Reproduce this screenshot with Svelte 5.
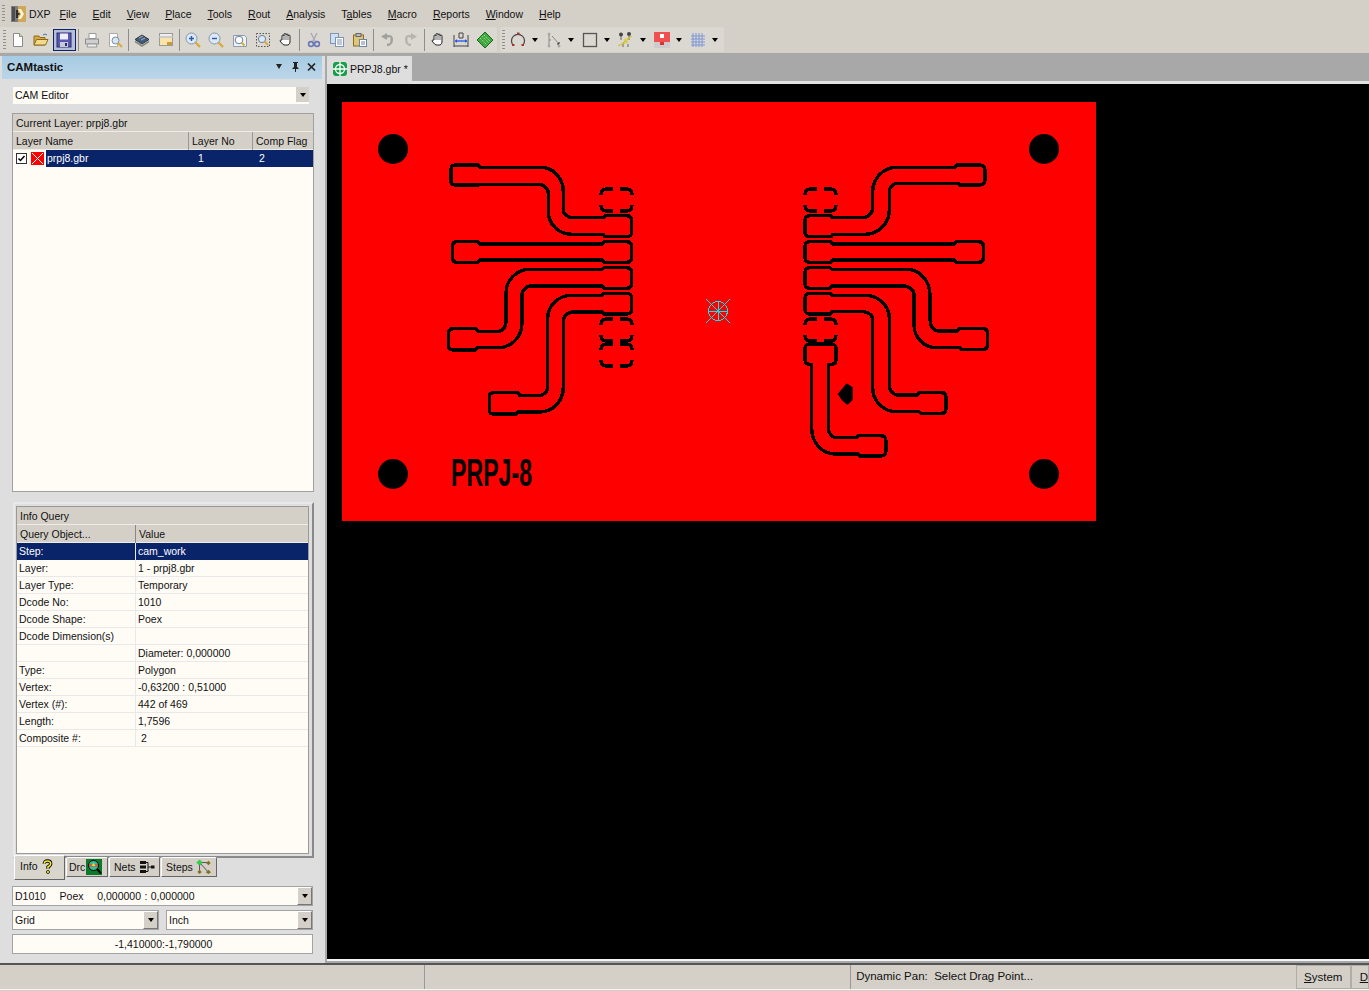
<script>
	const menus = [
		['F', 'ile'], ['E', 'dit'], ['V', 'iew'], ['P', 'lace'], ['T', 'ools'], ['R', 'out'],
		['A', 'nalysis'], ['Ta', 'bles', 1], ['M', 'acro'], ['R', 'eports'], ['W', 'indow'], ['H', 'elp']
	];

	const queryRows = [
		['Step:', 'cam_work'],
		['Layer:', '1 - prpj8.gbr'],
		['Layer Type:', 'Temporary'],
		['Dcode No:', '1010'],
		['Dcode Shape:', 'Poex'],
		['Dcode Dimension(s)', ''],
		['', 'Diameter: 0,000000'],
		['Type:', 'Polygon'],
		['Vertex:', '-0,63200 : 0,51000'],
		['Vertex (#):', '442 of 469'],
		['Length:', '1,7596'],
		['Composite #:', ' 2']
	];

	const traces = [
		'M455 165H478L480 167.5H541.7A21.6 24.2 0 0 1 563.3 191.7V210A10 7.7 0 0 0 573.3 217.7H603L605 215.7H626.7Q631.7 215.7 631.7 220.7V231.7Q631.7 236.7 626.7 236.7H605L603 234.3H571.7A23.4 22.6 0 0 1 548.3 211.7V193.3A10 9 0 0 0 538.3 184.3H480L478 185H455Q451 185 451 181V169Q451 165 455 165Z',
		'M457 241.7H478L480 244H602L604 241.7H626.7Q631.7 241.7 631.7 246.7V257.3Q631.7 262.3 626.7 262.3H604L602 260H480L478 262.3H457Q452.7 262.3 452.7 258V246Q452.7 241.7 457 241.7Z',
		'M626.7 267.7H604L602 269.3H530A24 24 0 0 0 506 293.3V321.7A7.7 9.6 0 0 1 498.3 331.3H478L476 328.7H453.3Q448.3 328.7 448.3 333.7V345Q448.3 350 453.3 350H475L477 347.7H498.3A23.7 24.4 0 0 0 522 323.3V295A9.7 9 0 0 1 531.7 286H602L604 288.3H626.7Q631.7 288.3 631.7 283.3V272.7Q631.7 267.7 626.7 267.7Z',
		'M626.7 293.3H604L602 295.3H571.7A24 23 0 0 0 547.7 318.3V386.7A9.4 9 0 0 1 538.3 395.7H520L518 392.7H493.3Q489.3 392.7 489.3 396.7V410Q489.3 414 493.3 414H516L518 412H540A23.3 24.7 0 0 0 563.3 387.3V321.7A10 9.7 0 0 1 573.3 312H602L604 314H626.7Q631.7 314 631.7 309V298.3Q631.7 293.3 626.7 293.3Z',
		'M809.7 215.7H831L833 217.7H861.7A11 9.4 0 0 0 872.7 208.3V191.7A24 24.4 0 0 1 896.7 167.3H955L957 165H980Q985 165 985 170V180Q985 185 980 185H960L958 183.3H898.3A9 8.4 0 0 0 889.3 191.7V210A24.3 24.3 0 0 1 865 234.3H833L831 236.7H809.7Q805 236.7 805 232V220.4Q805 215.7 809.7 215.7Z',
		'M809.7 241.7H831L833 244H954L956 241.7H978.6Q983.3 241.7 983.3 246.4V257.6Q983.3 262.3 978.6 262.3H956L954 260H833L831 262.3H809.7Q805 262.3 805 257.6V246.4Q805 241.7 809.7 241.7Z',
		'M809.7 267.7H830L832 269.3H906.7A23.3 25.7 0 0 1 930 295V320A8.3 11 0 0 0 938.3 331H957L959 328.7H983Q987.7 328.7 987.7 333.4V344.6Q987.7 349.3 983 349.3H961.7L959.7 347.7H936.7A22.7 22.7 0 0 1 914 325V295A10.7 9 0 0 0 903.3 286H832L830 288.3H809.7Q805 288.3 805 283.6V272.4Q805 267.7 809.7 267.7Z',
		'M809.7 293.3H830L832 295.3H865A24.3 23 0 0 1 889.3 318.3V385A9 10 0 0 0 898.3 395H917L919 392.7H941.7Q946 392.7 946 397V409Q946 413.3 941.7 413.3H921L919 411.7H896.7A24 23.4 0 0 1 872.7 388.3V320A9.4 8.3 0 0 0 863.3 311.7H832L830 314H809.7Q805 314 805 309.3V298Q805 293.3 809.7 293.3Z',
		'M809.7 344H831.3Q836 344 836 348.7V359.6Q836 364.3 831.3 364.3H828.3V428.3A8.4 9.4 0 0 0 836.7 437.7H856.5L858.5 435.7H880.7Q886 435.7 886 441V450.7Q886 456 880.7 456H860L858 454H835A23.3 25.7 0 0 1 811.7 428.3V364.3H809.7Q805 364.3 805 359.6V348.7Q805 344 809.7 344Z'
	];

	// pads that are only drawn as four corners
	const pads = [[601, 189], [601, 319], [601, 344], [805, 189], [805, 319]];
	const holes = [[393, 149], [1044, 149], [393, 474], [1044, 474]];

	function corners([x, y]) {
		const w = 31;
		const h = 22;
		return `M${x + 12} ${y}H${x + 5}Q${x} ${y} ${x} ${y + 6}M${x + w - 12} ${y}H${x + w - 5}Q${x + w} ${y} ${x + w} ${y + 6}` +
			`M${x} ${y + h - 6}Q${x} ${y + h} ${x + 5} ${y + h}H${x + 12}M${x + w} ${y + h - 6}Q${x + w} ${y + h} ${x + w - 5} ${y + h}H${x + w - 12}`;
	}
</script>

<div class="app">
	<nav class="menubar">
		<span class="grip"></span>
		<svg class="logo" viewBox="0 0 15 16">
			<rect width="8" height="16" fill="#7d7d7d" />
			<rect x="1" y="1" width="3" height="14" fill="#4e4e4e" />
			<rect x="7" width="8" height="16" fill="#cfa957" />
			<path d="M7 3h3l3 5-3 5H7l3-5z" fill="#fbf3d8" />
			<path d="M5 4h2v3h1l1 1-1 1H7v3H5z" fill="#2e2e2e" />
		</svg>
		<span class="menu dxp">DXP</span>
		{#each menus as m}
			<span class="menu">{#if m[2]}T<u>a</u>{:else}<u>{m[0]}</u>{/if}{m[1]}</span>
		{/each}
	</nav>

	<div class="toolbars">
		<div class="toolbar first">
			<span class="grip"></span>
			<span class="tb">
				<svg viewBox="0 0 16 16"><path d="M3.5 1.5h6l3 3v10h-9z" fill="#fff" stroke="#8a8a8a" /><path d="M9.5 1.5v3h3" fill="#e8d98a" stroke="#8a8a8a" /></svg>
			</span>
			<span class="tb">
				<svg viewBox="0 0 16 16"><path d="M1 13V4h5l1 1.5h5V13z" fill="#d9a93f" stroke="#8c6d20" /><path d="M1 13l2.5-5.5H15L12.5 13z" fill="#f5d98a" stroke="#8c6d20" /><path d="M10 3q2-2 4 0" fill="none" stroke="#4a6ea8" /></svg>
			</span>
			<span class="tb active">
				<svg viewBox="0 0 16 16"><rect x="1" y="1" width="14" height="14" fill="#5858b0" stroke="#2a2a70" /><rect x="4" y="1.5" width="8" height="6" fill="#eef" /><rect x="4" y="10" width="8" height="5" fill="#c8c8d8" /><rect x="9" y="11" width="2" height="3" fill="#2a2a70" /></svg>
			</span>
			<span class="sep"></span>
			<span class="tb">
				<svg viewBox="0 0 16 16"><path d="M5 1.5h7v5H5z" fill="#fff" stroke="#9a9a9a" /><path d="M1.5 7h13v5h-13z" fill="#cfcfcf" stroke="#8a8a8a" /><path d="M4 12h8l1 3H3z" fill="#eee" stroke="#9a9a9a" /></svg>
			</span>
			<span class="tb">
				<svg viewBox="0 0 16 16"><path d="M2.5 1.5h8v13h-8z" fill="#fff" stroke="#aaa" /><circle cx="8.5" cy="8.5" r="3.5" fill="#d6e6f5" stroke="#7d8ea3" /><path d="M11 11l4 4" stroke="#d8a93c" stroke-width="2" /></svg>
			</span>
			<span class="sep"></span>
			<span class="tb">
				<svg viewBox="0 0 16 16"><path d="M8 3l7 4.5L8 12 1 7.5z" fill="#3f5f7f" stroke="#333" /><path d="M1 9.5L8 14l7-4.5" fill="none" stroke="#888" stroke-width="1.5" /><path d="M5 6l4-2M7 8l4-2" stroke="#aac" /></svg>
			</span>
			<span class="tb">
				<svg viewBox="0 0 16 16"><rect x="1.5" y="1.5" width="13" height="12" fill="#eee" stroke="#999" /><rect x="1.5" y="4" width="13" height="2" fill="#ccc" /><rect x="2" y="6" width="12" height="7" fill="#fbe3a8" /><rect x="9" y="10" width="5" height="3" fill="#c89a3a" /></svg>
			</span>
			<span class="sep"></span>
			<span class="tb">
				<svg viewBox="0 0 16 16"><circle cx="6.5" cy="6.5" r="5.5" fill="#dbe8f5" stroke="#8496a8" /><path d="M4 6.5h5M6.5 4v5" stroke="#2a5aa8" stroke-width="1.4" /><path d="M10.500 10.500l4.500 4.500" stroke="#d8a93c" stroke-width="2.4" /></svg>
			</span>
			<span class="tb">
				<svg viewBox="0 0 16 16"><circle cx="6.5" cy="6.5" r="5.5" fill="#dbe8f5" stroke="#8496a8" /><path d="M4 6.5h5" stroke="#2a5aa8" stroke-width="1.4" /><path d="M10.500 10.500l4.500 4.500" stroke="#d8a93c" stroke-width="2.4" /></svg>
			</span>
			<span class="tb">
				<svg viewBox="0 0 16 16"><path d="M1.500 3.500h11l2 2v9h-13z" fill="#eef3f8" stroke="#8a9cae" /><circle cx="7" cy="8" r="3.8" fill="#fff" stroke="#6a7f98" /><path d="M9.500 10.500l3 3" stroke="#d8a93c" stroke-width="2" /></svg>
			</span>
			<span class="tb">
				<svg viewBox="0 0 16 16"><rect x="1.5" y="1.5" width="13" height="13" fill="none" stroke="#555" stroke-dasharray="1.5 1.5" /><circle cx="7" cy="7" r="3.6" fill="#dbe8f5" stroke="#6a7f98" /><path d="M9.5 9.5l3.5 3.5" stroke="#d8a93c" stroke-width="2" /></svg>
			</span>
			<span class="tb">
				<svg viewBox="0 0 16 16"><path d="M4 8V4q0-1 1-1t1 1V2.500q0-1 1-1t1 1V3q0-1 1-1t1 1v1q0-1 1-1t1 1v6q0 2-2 3H6q-1 0-4-4 0-1 1-1z" fill="#fff" stroke="#222" /><path d="M6 4v4M8 3v5M10 4v4" stroke="#222" stroke-width=".7" /></svg>
			</span>
			<span class="sep"></span>
			<span class="tb">
				<svg viewBox="0 0 16 16"><path d="M5 1l4 8M11 1L7 9" stroke="#a8a8bc" stroke-width="1.4" /><circle cx="5" cy="12" r="2.4" fill="none" stroke="#6a78b8" stroke-width="1.6" /><circle cx="11" cy="12" r="2.4" fill="none" stroke="#6a78b8" stroke-width="1.6" /></svg>
			</span>
			<span class="tb">
				<svg viewBox="0 0 16 16"><rect x="1.5" y="1.5" width="8" height="10" fill="#cfe0f2" stroke="#7d94b4" /><rect x="6.5" y="5.5" width="8" height="9" fill="#fff" stroke="#7d94b4" /><path d="M8 8h5M8 10h5M8 12h5" stroke="#7d94b4" /></svg>
			</span>
			<span class="tb">
				<svg viewBox="0 0 16 16"><rect x="1.5" y="3" width="10" height="11" fill="#e2c677" stroke="#8c6d20" /><rect x="4" y="1.5" width="5" height="3" fill="#bbb" stroke="#666" /><rect x="7.5" y="7.5" width="7" height="7" fill="#fff" stroke="#6a84a8" /><path d="M9 10h4M9 12h4" stroke="#6a84a8" /></svg>
			</span>
			<span class="sep"></span>
			<span class="tb">
				<svg viewBox="0 0 16 16"><path d="M8 3h2q4 0 4 4.500T10 14H8v-2.500h2q1.500 0 1.500-4T10 5.500H8V8L2 4.500 8 1z" fill="#a0a09c" /></svg>
			</span>
			<span class="tb">
				<svg viewBox="0 0 16 16"><path d="M8 3H6Q2 3 2 7.500T6 14h2v-2.500H6q-1.500 0-1.500-4T6 5.500h2V8l6-3.500L8 1z" fill="#b4b4b0" /></svg>
			</span>
			<span class="sep"></span>
			<span class="tb">
				<svg viewBox="0 0 16 16"><path d="M4 8V4q0-1 1-1t1 1V2.500q0-1 1-1t1 1V3q0-1 1-1t1 1v1q0-1 1-1t1 1v6q0 2-2 3H6q-1 0-4-4 0-1 1-1z" fill="#fff" stroke="#222" /><path d="M6 4v4M8 3v5M10 4v4" stroke="#222" stroke-width=".7" /></svg>
			</span>
			<span class="tb">
				<svg viewBox="0 0 16 16"><path d="M1 3v12M15 3v12M1 14h14" stroke="#444" /><path d="M6 1v5h4V1H6z" fill="none" stroke="#444" /><path d="M2 9h12" stroke="#2255ee" stroke-width="1.300" /><path d="M2 9l2-2v4zM14 9l-2-2v4z" fill="#2255ee" /></svg>
			</span>
			<span class="tb">
				<svg viewBox="0 0 16 16"><path d="M8 0l8 8-8 8-8-8z" fill="#3fa83f" stroke="#1f6a1f" /><path d="M5 4l7 7M7 3l6 6M3 6l7 7" stroke="#a4dc8c" stroke-dasharray="1.500 1" /></svg>
			</span>
		</div>

		<div class="toolbar second">
			<span class="grip"></span>
			<span class="dd">
				<svg viewBox="0 0 16 16"><path d="M3 13A6.500 6.500 0 1 1 13 13" fill="none" stroke="#444" stroke-width="1.200" /><rect x="2" y="12" width="2.500" height="2" fill="#a33" /><rect x="11.500" y="12" width="2.500" height="2" fill="#a33" /><rect x="7" y="0.500" width="2.500" height="2" fill="#a33" /></svg>
				<i></i>
			</span>
			<span class="dd">
				<svg viewBox="0 0 16 16"><circle cx="3" cy="2" r="1.500" fill="#aaa" /><circle cx="3" cy="14" r="1.500" fill="#aaa" /><circle cx="13" cy="14" r="1.500" fill="#aaa" /><path d="M3 3v10M3 8h2M6 4l7 8" stroke="#888" /><path d="M11 12h2v-2" fill="none" stroke="#333" /></svg>
				<i></i>
			</span>
			<span class="dd">
				<svg viewBox="0 0 16 16"><rect x="1.500" y="1.500" width="13" height="13" fill="none" stroke="#555" stroke-width="1.300" /></svg>
				<i></i>
			</span>
			<span class="dd">
				<svg viewBox="0 0 16 16"><circle cx="3" cy="2.500" r="2" fill="#444" /><circle cx="11" cy="2" r="2" fill="#444" /><path d="M3 4v4M11 4v4M5 15v-3q0-2 2-2M10 15v-3" fill="none" stroke="#666" /><path d="M0 14l8-5-2-1 8-4-6 5 2 1z" fill="#f0e030" stroke="#c0b010" stroke-width=".4" /></svg>
				<i></i>
			</span>
			<span class="dd">
				<svg viewBox="0 0 16 16"><rect x="0" y="0" width="16" height="10" fill="#f05050" /><rect x="0" y="10" width="16" height="6" fill="#ccc" /><rect x="6" y="2" width="4" height="4" fill="#fff" /><rect x="6" y="10" width="4" height="3" fill="#e03030" /></svg>
				<i></i>
			</span>
			<span class="dd">
				<svg viewBox="0 0 16 16"><path d="M1 4h14M1 7h14M1 10h14M1 13h14M3 1v14M6 1v14M9 1v14M12 1v14" stroke="#7c96d4" /></svg>
				<i></i>
			</span>
		</div>
	</div>

	<main class="main">
		<aside class="panel">
			<header class="panel-head">
				<b>CAMtastic</b>
				<span class="down"></span>
				<svg class="pin" viewBox="0 0 9 10"><path d="M2 0h5v1H6v4l1.500 1v1H5v3H4V7H1.500V6L3 5V1H2z" fill="#222" /></svg>
				<svg class="pin close" viewBox="0 0 9 9"><path d="M1 1l7 7M8 1L1 8" stroke="#222" stroke-width="1.700" /></svg>
			</header>

			<div class="combo editor">
				<span>CAM Editor</span>
				<span class="combo-btn flat"><i></i></span>
			</div>

			<section class="layers">
				<div class="caption">Current Layer: prpj8.gbr</div>
				<div class="layer-cols">
					<span>Layer Name</span>
					<span>Layer No</span>
					<span>Comp Flag</span>
				</div>
				<div class="layer-row">
					<span class="layer-marks">
						<svg viewBox="0 0 11 11" class="check"><rect x=".5" y=".5" width="10" height="10" fill="#fff" stroke="#333" /><path d="M2.500 5.500l2 2 4-4.500" fill="none" stroke="#000" stroke-width="1.500" /></svg>
						<svg viewBox="0 0 13 13" class="swatch"><rect width="13" height="13" fill="#f00" /><path d="M1 1l11 11M12 1L1 12" stroke="#fff" /></svg>
					</span>
					<span class="layer-name">prpj8.gbr</span>
					<span>1</span>
					<span>2</span>
				</div>
			</section>

			<section class="query">
				<div class="query-inner">
					<div class="caption">Info Query</div>
					<div class="query-cols">
						<span>Query Object...</span>
						<span>Value</span>
					</div>
					{#each queryRows as row, i}
						<div class="query-row" class:selected={i === 0}>
							<span>{row[0]}</span>
							<span>{row[1]}</span>
						</div>
					{/each}
				</div>
			</section>

			<div class="tabs">
				<span class="tab on">Info
					<svg viewBox="0 0 12 16"><path d="M2.500 5q0-3 3.500-3t3.500 3q0 2-3 3.500V10.500" fill="none" stroke="#000" stroke-width="3.600" /><path d="M2.500 5q0-3 3.500-3t3.500 3q0 2-3 3.500V10.500" fill="none" stroke="#f8e830" stroke-width="1.800" /><circle cx="6.500" cy="14" r="1.700" fill="#f8e830" stroke="#000" stroke-width=".8" /></svg>
				</span>
				<span class="tab">Drc
					<svg viewBox="0 0 16 16" class="wide"><rect width="16" height="16" fill="#0a7a2a" /><circle cx="7.500" cy="6.500" r="5" fill="#30c0a0" stroke="#000" /><path d="M3 6.500h9" stroke="#f04030" stroke-width="2" /><path d="M7.500 4l2 3h-4z" fill="#f0e030" /><path d="M11 10l4 4.500" stroke="#000" stroke-width="2" /></svg>
				</span>
				<span class="tab">Nets
					<svg viewBox="0 0 16 14" class="wide"><path d="M1 1h6v3H1zM1 5.500h6v3H1zM1 10h6v3H1z" fill="#111" /><path d="M7 2.500h2v9H7M9 7h3" fill="none" stroke="#111" /><rect x="12" y="5.500" width="3.500" height="3" fill="#111" /></svg>
				</span>
				<span class="tab">Steps
					<svg viewBox="0 0 18 16" class="wide"><path d="M4 3l10 0M4 3l10 11M4 3v10" stroke="#444" fill="none" /><path d="M4 0l3 3-3 3-3-3z" fill="#20e030" stroke="#186" stroke-width=".5" /><path d="M14 1l2.500 2.500L14 6l-2.500-2.500zM4 11l2.500 2.500L4 16l-2.500-2.500zM14 11l3 3-3 2-3-2z" fill="#807020" /></svg>
				</span>
			</div>

			<div class="combo wide-combo">
				<span class="keep">D1010    Poex    0,000000 : 0,000000</span>
				<span class="combo-btn"><i></i></span>
			</div>
			<div class="combo-pair">
				<div class="combo">
					<span>Grid</span>
					<span class="combo-btn"><i></i></span>
				</div>
				<div class="combo">
					<span>Inch</span>
					<span class="combo-btn"><i></i></span>
				</div>
			</div>
			<div class="combo coords">-1,410000:-1,790000</div>
		</aside>

		<div class="doc">
			<div class="doc-tabs">
				<span class="doc-tab">
					<svg viewBox="0 0 14 14"><rect width="14" height="14" rx="3" fill="#18a048" /><circle cx="7" cy="7" r="4.500" fill="none" stroke="#fff" stroke-width="1.300" /><path d="M7 0v14M0 7h14" stroke="#fff" stroke-width="1.300" /></svg>
					PRPJ8.gbr *
				</span>
			</div>
			<div class="canvas">
				<svg class="board" viewBox="342 102 754 419" width="754" height="419">
					<rect x="342" y="102" width="754" height="419" fill="#f00" />
					{#each holes as h}
						<circle cx={h[0]} cy={h[1]} r="15" fill="#000" />
					{/each}
					<g fill="none" stroke="#000" stroke-width="3.400" shape-rendering="crispEdges">
						{#each traces as d}
							<path {d} />
						{/each}
						{#each pads as p}
							<path d={corners(p)} />
						{/each}
					</g>
					<path d="M837.700 394L846.700 383.300 852.700 387.300V400L847.300 405 841.700 400z" fill="#000" />
					<text class="silk" x="451" y="486" textLength="81" lengthAdjust="spacingAndGlyphs">PRPJ-8</text>
					<g stroke="#00e8f0" fill="none" shape-rendering="crispEdges">
						<path d="M706 299L730 323M730 299L706 323M708 311H728M718 301V321" />
						<circle cx="718" cy="311" r="9.500" />
					</g>
				</svg>
			</div>
		</div>
	</main>

	<footer class="status">
		<span class="cell one"></span>
		<span class="cell two"></span>
		<span class="cell three">Dynamic Pan:  Select Drag Point...</span>
		<span class="sys"><u>S</u>ystem</span>
		<span class="sys last"><u>D</u></span>
	</footer>
</div>

<style>
	:global(body) {
		margin: 0;
		overflow: hidden;
		background: #d4d0c8;
	}

	.app {
		width: 1369px;
		height: 991px;
		display: flex;
		flex-direction: column;
		overflow: hidden;
		font: 10.5px "Liberation Sans", Arial, sans-serif;
		color: #111;
		background: #d4d0c8;
	}

	.menubar {
		height: 27px;
		display: flex;
		align-items: center;
		padding-left: 2px;
		box-sizing: border-box;
	}

	.grip {
		width: 3px;
		height: 17px;
		margin-right: 5px;
		background: repeating-linear-gradient(#8f8f8f 0 1px, transparent 1px 3px);
		flex: none;
	}

	.logo {
		width: 15px;
		height: 16px;
		margin-left: 1px;
		margin-right: 3px;
	}

	.menu {
		padding: 0 8px;
		white-space: nowrap;
	}

	.menu.dxp {
		padding: 0 1px 0 0;
	}

	u {
		text-underline-offset: 1px;
	}

	.toolbars {
		height: 26px;
		display: flex;
		gap: 3px;
	}

	.toolbar {
		height: 25px;
		display: flex;
		align-items: center;
		background: #dbd8d1;
		border-radius: 0 3px 3px 0;
		padding-left: 3px;
		box-sizing: border-box;
	}

	.toolbar .grip {
		margin-right: 0;
		height: 19px;
	}

	.first {
		width: 497px;
		flex: none;
	}

	.second {
		width: 224px;
		flex: none;
		border-radius: 3px;
		padding-left: 2px;
	}

	.tb {
		width: 23.4px;
		height: 22px;
		flex: none;
		display: flex;
		align-items: center;
		justify-content: center;
		box-sizing: border-box;
	}

	.tb svg,
	.dd svg {
		width: 16px;
		height: 16px;
		flex: none;
	}

	.tb.active {
		background: #b7bfd8;
		border: 1px solid #0a246a;
	}

	.sep {
		width: 1px;
		height: 22px;
		margin: 0 1.400px;
		background: #8d8d8d;
		flex: none;
	}

	.dd {
		width: 36px;
		flex: none;
		display: flex;
		align-items: center;
		padding-left: 3px;
		box-sizing: border-box;
	}

	.dd:nth-child(2) {
		margin-left: 2px;
	}

	.dd i {
		width: 0;
		height: 0;
		margin-left: 6px;
		border: 3.500px solid transparent;
		border-top: 4px solid #000;
		border-bottom: 0;
	}

	.main {
		flex: 1;
		min-height: 0;
		display: flex;
		background: #a8a8a8;
		padding-top: 3px;
	}

	.panel {
		width: 325px;
		flex: none;
		box-sizing: border-box;
		background: #dedede;
		padding: 0 2px;
		display: flex;
		flex-direction: column;
		align-items: flex-start;
	}

	.panel-head {
		width: 320px;
		height: 23px;
		flex: none;
		display: flex;
		align-items: center;
		padding: 0 0 2px 5px;
		box-sizing: border-box;
		background: linear-gradient(#a6cbe3, #bcd6e8);
		font-size: 11.5px;
	}

	.panel-head b {
		flex: 1;
	}

	.down {
		width: 0;
		height: 0;
		border: 3.500px solid transparent;
		border-top: 5px solid #222;
		border-bottom: 0;
		margin-right: 9px;
	}

	.pin {
		width: 9px;
		height: 10px;
		margin-right: 7px;
	}

	.pin.close {
		margin-right: 6px;
	}

	.combo {
		height: 20px;
		box-sizing: border-box;
		background: #fffcf6;
		border: 1px solid #a3a3a3;
		display: flex;
		align-items: center;
		justify-content: space-between;
		padding-left: 2px;
	}

	.combo-btn {
		width: 15px;
		height: 18px;
		background: #d4d0c8;
		border: 1px solid;
		border-color: #fff #777 #777 #fff;
		box-sizing: border-box;
		display: flex;
		align-items: center;
		justify-content: center;
	}

	.combo-btn.flat {
		width: 13px;
		height: 15px;
		border: 0;
	}

	.combo-btn i {
		width: 0;
		height: 0;
		border: 3.500px solid transparent;
		border-top: 4px solid #000;
		border-bottom: 0;
	}

	.editor {
		width: 296px;
		height: 17px;
		margin: 8px 0 0 11px;
		padding: 0 0 2px 2px;
		border: 0;
		flex: none;
	}

	.layers {
		width: 302px;
		height: 379px;
		flex: none;
		margin: 9px 0 0 10px;
		box-sizing: border-box;
		border: 1px solid #a0a0a0;
		background: #fffcf6;
	}

	.caption {
		height: 17px;
		line-height: 18px;
		padding-left: 3px;
		background: #d4d0c8;
		border-bottom: 1px solid #efece6;
	}

	.layer-cols,
	.layer-row {
		display: grid;
		grid-template-columns: 176px 64px 1fr;
		height: 17px;
		line-height: 18px;
	}

	.layer-cols {
		background: #d4d0c8;
		border-bottom: 1px solid #efece6;
	}

	.layer-cols span {
		padding-left: 3px;
		border-right: 1px solid #999;
		box-sizing: border-box;
	}

	.layer-cols span:last-child {
		border-right: 0;
	}

	.layer-row {
		grid-template-columns: 33px 143px 64px 1fr;
		line-height: 17px;
		background: #0a246a;
		color: #fff;
	}

	.layer-row span:nth-child(3) {
		padding-left: 9px;
	}

	.layer-row span:nth-child(4) {
		padding-left: 6px;
	}

	.layer-marks {
		background: #fffcf6;
		display: flex;
		align-items: center;
		padding-left: 3px;
		gap: 4px;
	}

	.check {
		width: 11px;
		height: 11px;
	}

	.swatch {
		width: 13px;
		height: 13px;
	}

	.layer-name {
		padding-left: 1px;
	}

	.query {
		width: 301px;
		height: 356px;
		flex: none;
		margin: 10px 0 0 11px;
		box-sizing: border-box;
		padding: 2px 3px 2px 1px;
		border: 2px solid;
		border-color: #e8e8e8 #8a8a8a #8a8a8a #e8e8e8;
		background: #dedede;
	}

	.query-inner {
		height: 100%;
		background: #fffcf6;
		border: 1px solid #9a9a9a;
		box-sizing: border-box;
		overflow: hidden;
	}

	.query-cols {
		display: grid;
		grid-template-columns: 119px 1fr;
		height: 17px;
		line-height: 18px;
		background: #d4d0c8;
		border-bottom: 1px solid #efece6;
	}

	.query-cols span {
		padding-left: 3px;
	}

	.query-cols span:first-child {
		border-right: 1px solid #888;
	}

	.query-row {
		display: grid;
		grid-template-columns: 119px 1fr;
		height: 17px;
		line-height: 16px;
		box-sizing: border-box;
		border-bottom: 1px solid #e9e9e9;
		white-space: pre;
	}

	.query-row span {
		padding-left: 2px;
		overflow: hidden;
	}

	.query-row span:first-child {
		border-right: 1px solid #e9e9e9;
	}

	.query-row.selected {
		background: #0a246a;
		color: #fff;
		border-bottom: 0;
	}

	.tabs {
		display: flex;
		align-items: flex-start;
		gap: 1px;
		margin: -3px 0 0 12px;
		height: 25px;
		flex: none;
		position: relative;
	}

	.tab {
		height: 20px;
		margin-top: 2px;
		display: flex;
		align-items: center;
		gap: 1px;
		padding: 0 2px;
		background: #d4d0c8;
		border: 1px solid;
		border-color: #fff #666 #666 #fff;
		box-sizing: border-box;
		border-radius: 2px 2px 0 0;
	}

	.tab:nth-child(2) {
		width: 42px;
	}

	.tab:nth-child(3) {
		width: 51px;
		padding-left: 4px;
		gap: 3px;
	}

	.tab:nth-child(4) {
		width: 56px;
		padding-left: 4px;
		gap: 3px;
	}

	.tab svg {
		width: 11px;
		height: 15px;
	}

	.tab svg.wide {
		width: 16px;
		height: 16px;
	}

	.tab.on {
		height: 25px;
		margin-top: 0;
		width: 51px;
		padding: 0 0 3px 5px;
		gap: 4px;
		background: #d8d5cd;
	}

	.wide-combo {
		width: 301px;
		margin: 6px 0 0 10px;
		flex: none;
	}

	.keep {
		white-space: pre;
		word-spacing: 0.5px;
	}

	.combo-pair {
		width: 301px;
		margin: 4px 0 0 10px;
		display: grid;
		grid-template-columns: 147px 147px;
		gap: 7px;
		flex: none;
	}

	.coords {
		width: 301px;
		margin: 4px 0 0 10px;
		justify-content: center;
		flex: none;
	}

	.doc {
		flex: 1;
		min-width: 0;
		display: flex;
		flex-direction: column;
		padding: 0 0 2px 2px;
	}

	.doc-tabs {
		height: 25px;
		flex: none;
		border-bottom: 3px solid #e2e2e2;
		box-sizing: content-box;
		display: flex;
	}

	.doc-tab {
		width: 85px;
		height: 28px;
		background: #dedede;
		display: flex;
		align-items: center;
		gap: 3px;
		padding: 0 0 3px 6px;
		box-sizing: border-box;
		white-space: nowrap;
	}

	.doc-tab svg {
		width: 14px;
		height: 14px;
		flex: none;
	}

	.canvas {
		flex: 1;
		background: #000;
		padding: 18px 0 0 15px;
		border-bottom: 2px solid #f4f4f4;
		min-height: 0;
	}

	.board {
		display: block;
	}

	.silk {
		font: bold 38px "Liberation Sans", sans-serif;
		fill: #000;
	}

	.status {
		height: 27px;
		flex: none;
		box-sizing: border-box;
		display: flex;
		align-items: stretch;
		border-top: 2px solid #555;
		border-bottom: 1px solid #f5f5f0;
		margin-bottom: 1px;
		font-size: 11.5px;
	}

	.cell {
		display: flex;
		align-items: center;
		white-space: pre;
		border-right: 1px solid #999;
		box-sizing: border-box;
		padding-bottom: 2px;
	}

	.one {
		width: 425px;
	}

	.two {
		width: 427px;
	}

	.three {
		width: 445px;
		padding-left: 5px;
		border-right: 0;
	}

	.sys {
		width: 55px;
		display: flex;
		align-items: center;
		justify-content: center;
		border: 1px solid #b0ada6;
		box-sizing: border-box;
	}

	.sys.last {
		flex: 1;
		justify-content: flex-start;
		padding-left: 8px;
	}
</style>
